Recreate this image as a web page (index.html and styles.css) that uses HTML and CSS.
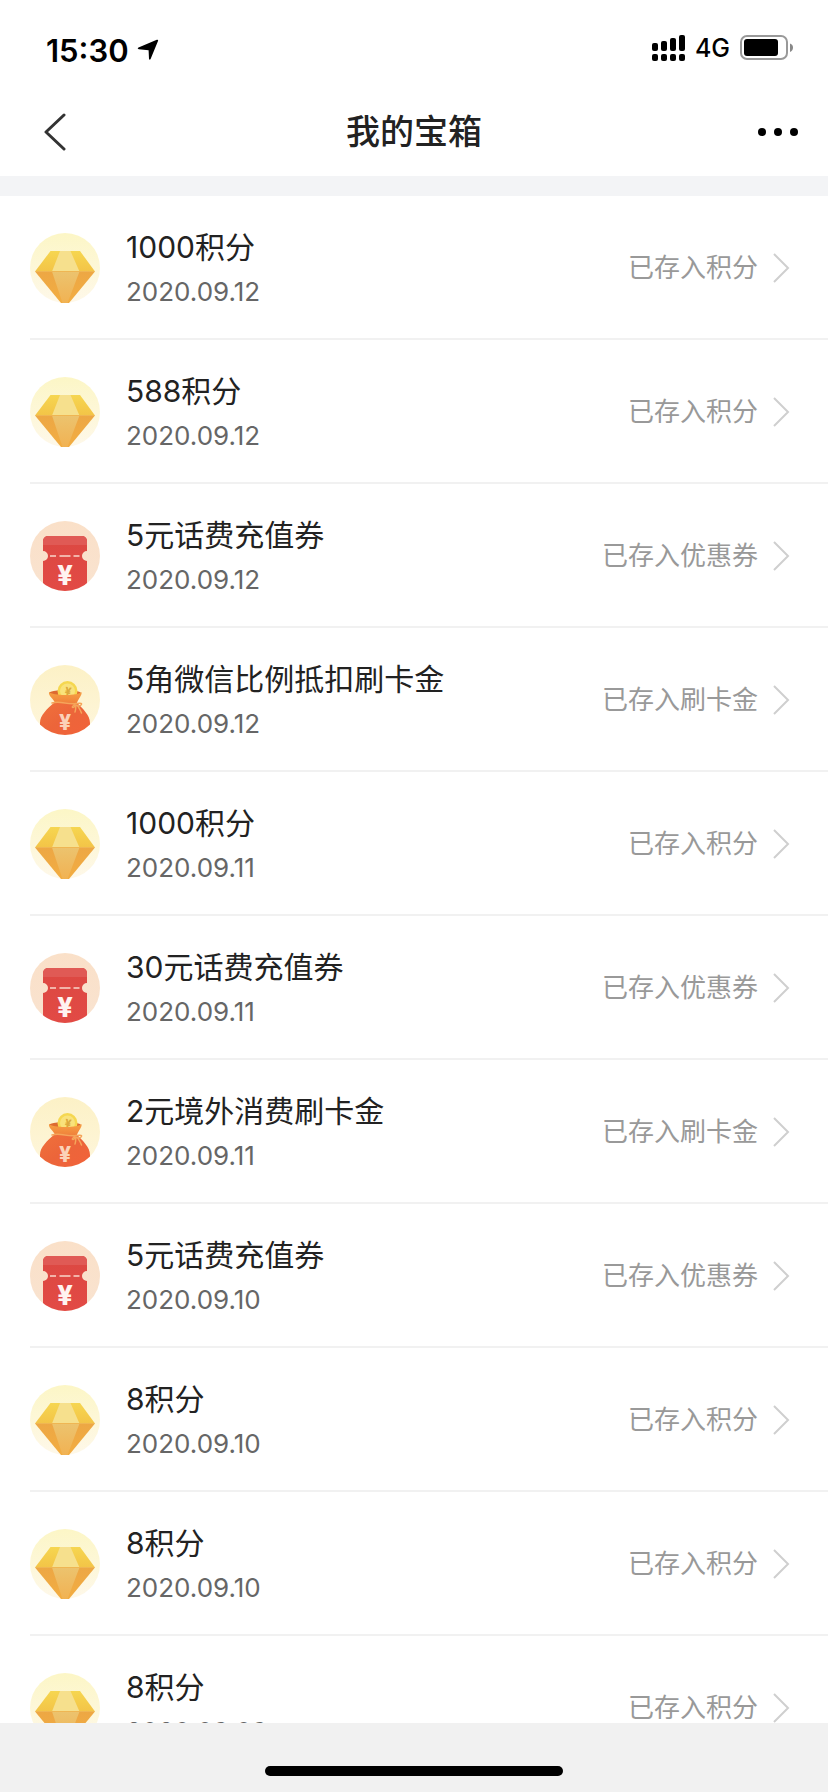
FILE: index.html
```html
<!DOCTYPE html>
<html lang="zh-CN">
<head>
<meta charset="utf-8">
<meta name="viewport" content="width=device-width, initial-scale=1">
<title>我的宝箱</title>
<link rel="stylesheet" href="styles.css">
</head>
<body>
<svg class="sprite" width="0" height="0" aria-hidden="true">
  <defs>
    <linearGradient id="halo" x1="0" y1="0" x2="0" y2="1"><stop offset="0" stop-color="#fcf6c6"/><stop offset="1" stop-color="#fef8ea"/></linearGradient>
    <linearGradient id="gemTop" x1="0" y1="0" x2="0" y2="1"><stop offset="0" stop-color="#f6d650"/><stop offset="1" stop-color="#f3c447"/></linearGradient>
    <linearGradient id="gemLow" x1="0" y1="0" x2="0" y2="1"><stop offset="0" stop-color="#eda744"/><stop offset="1" stop-color="#f2ad42"/></linearGradient>
    <linearGradient id="gemMid" x1="0" y1="0" x2="0" y2="1"><stop offset="0" stop-color="#ecc36e"/><stop offset="1" stop-color="#f1b253"/></linearGradient>
    <linearGradient id="peach" x1="0" y1="0" x2="0" y2="1"><stop offset="0" stop-color="#fae0c8"/><stop offset="1" stop-color="#f9e3d0"/></linearGradient>
    <linearGradient id="red" x1="0" y1="0" x2="0" y2="1"><stop offset="0" stop-color="#dc4842"/><stop offset="1" stop-color="#e24a45"/></linearGradient>
    <linearGradient id="cream" x1="0" y1="0" x2="0" y2="1"><stop offset="0" stop-color="#fcf1c6"/><stop offset="1" stop-color="#fef6dc"/></linearGradient>
    <linearGradient id="bagBody" x1="0" y1="0" x2="1" y2="1"><stop offset="0" stop-color="#f0713b"/><stop offset=".5" stop-color="#ec653a"/><stop offset="1" stop-color="#f2623a"/></linearGradient>
    <linearGradient id="bagRim" x1="0" y1="0" x2="0" y2="1"><stop offset="0" stop-color="#f6a043"/><stop offset="1" stop-color="#ef7f3a"/></linearGradient>
    <clipPath id="disc"><circle cx="35" cy="35" r="35"/></clipPath>
  </defs>
  <symbol id="gem" viewBox="0 0 70 70">
    <circle cx="35" cy="35" r="35" fill="url(#halo)"/>
    <path d="M20.500 18H50L65 38.500H5z" fill="url(#gemTop)"/>
    <path d="M5 38.500H65L39 70H31z" fill="url(#gemLow)"/>
    <path d="M30 18H40.500L49.500 38.500H22z" fill="#f6e08d"/>
    <path d="M22 38.500H49.500L37.500 70H32.500z" fill="url(#gemMid)"/>
    <path d="M5.500 38.500H64.500" stroke="#efb653" stroke-width="1"/>
  </symbol>
  <symbol id="ticket" viewBox="0 0 70 70">
    <circle cx="35" cy="35" r="35" fill="url(#peach)"/>
    <g clip-path="url(#disc)">
      <path d="M18 15H52a5 5 0 0 1 5 5V30a5 5 0 0 0 0 10V70H13V40a5 5 0 0 0 0-10V20a5 5 0 0 1 5-5z" fill="url(#red)"/>
      <path d="M18 15H52a5 5 0 0 1 5 5V24H13V20a5 5 0 0 1 5-5z" fill="#e05a55"/>
      <path d="M20 35h6M29.500 35h11M43.500 35h6" stroke="#f2b3a8" stroke-width="2"/>
      <text class="yen" x="35" y="64" font-size="27" fill="#fff3f1">¥</text>
    </g>
  </symbol>
  <symbol id="bag" viewBox="0 0 70 70">
    <circle cx="35" cy="35" r="35" fill="url(#cream)"/>
    <g clip-path="url(#disc)">
      <ellipse cx="35" cy="28" rx="16" ry="3" fill="#dd6a31"/>
      <circle cx="37.500" cy="26" r="10" fill="#f5d750"/>
      <circle cx="37.500" cy="26" r="7.500" fill="#f9e27b"/>
      <text class="yen" x="38" y="30" font-size="11" fill="#dca93c" transform="rotate(10 38 26)">¥</text>
      <path d="M25 37C17 44 10 50 10 58V70H60V58C60 50 53 44 46 37z" fill="url(#bagBody)"/>
      <path d="M19 27C22 31 49 31 51.500 27C52.500 30 48 34 46.500 39C40 37 31 37 25 38C24 34 18 31 19 27z" fill="url(#bagRim)"/>
      <path d="M22 38C30 35.500 38 40 46 38.500C51 38 53 38 50.500 40.500C48.500 42 46 39 43.500 40.500C40.500 42.500 44 44 46 40C45.500 42 46 45 45 47M47.500 40.500C49 43 50.500 45 51.500 48" fill="none" stroke="#f5a55a" stroke-width="1.500" stroke-linecap="round"/>
      <text class="yen" x="35" y="65" font-size="21" fill="#fbd2b8">¥</text>
    </g>
  </symbol>
  <symbol id="chevron" viewBox="0 0 18 32">
    <path d="M2 2L16 16L2 30" fill="none" stroke="#cfcfcf" stroke-width="2"/>
  </symbol>
</svg>

<div class="statusbar">
  <div class="clock">
    <span>15:30</span>
    <svg width="22" height="22" viewBox="0 0 22 22" aria-hidden="true"><path d="M19.800 .8Q21.600 .3 21 2L13.600 20Q12.600 21.500 12 19.800L11.600 11.300L1.800 10.300Q-.2 9.500 1.500 8.400z" fill="#000"/></svg>
  </div>
  <div class="signals">
    <svg width="33" height="26" viewBox="0 0 33 26" aria-hidden="true">
      <rect x="0" y="8" width="6" height="8" rx="2"/><rect x="9" y="6" width="6" height="10" rx="2"/><rect x="18" y="3" width="6" height="13" rx="2"/><rect x="27" y="0" width="6" height="16" rx="2"/>
      <rect x="0" y="19" width="6" height="7" rx="2"/><rect x="9" y="19" width="6" height="7" rx="2"/><rect x="18" y="19" width="6" height="7" rx="2"/><rect x="27" y="19" width="6" height="7" rx="2"/>
    </svg>
    <span>4G</span>
    <svg width="54" height="26" viewBox="0 0 54 26" aria-hidden="true">
      <rect x="1" y="1" width="46" height="23" rx="6" fill="none" stroke="#999" stroke-width="2"/>
      <rect x="4" y="4" width="34" height="17" rx="3"/>
      <path d="M50 8.500Q53 9.500 53 12.500T50 17z" fill="#888"/>
    </svg>
  </div>
</div>

<header class="navbar">
  <button class="icon-button" type="button" aria-label="返回"><svg width="24" height="38" viewBox="0 0 24 38"><path d="M21 2L3 19L21 36" fill="none" stroke="#333" stroke-width="3" stroke-linecap="round" stroke-linejoin="round"/></svg></button>
  <h1 class="title">我的宝箱</h1>
  <button class="icon-button more" type="button" aria-label="更多"><svg width="40" height="8" viewBox="0 0 40 8"><circle cx="4" cy="4" r="4"/><circle cx="20" cy="4" r="4"/><circle cx="36" cy="4" r="4"/></svg></button>
</header>

<main class="content">
  <ul class="rewards">
    <li><a class="reward" href="#"><svg class="badge"><use href="#gem"/></svg><span class="info"><span class="name">1000积分</span><time class="date">2020.09.12</time></span><span class="state">已存入积分</span><svg class="arrow"><use href="#chevron"/></svg></a></li>
    <li><a class="reward" href="#"><svg class="badge"><use href="#gem"/></svg><span class="info"><span class="name">588积分</span><time class="date">2020.09.12</time></span><span class="state">已存入积分</span><svg class="arrow"><use href="#chevron"/></svg></a></li>
    <li><a class="reward" href="#"><svg class="badge"><use href="#ticket"/></svg><span class="info"><span class="name">5元话费充值券</span><time class="date">2020.09.12</time></span><span class="state">已存入优惠券</span><svg class="arrow"><use href="#chevron"/></svg></a></li>
    <li><a class="reward" href="#"><svg class="badge"><use href="#bag"/></svg><span class="info"><span class="name">5角微信比例抵扣刷卡金</span><time class="date">2020.09.12</time></span><span class="state">已存入刷卡金</span><svg class="arrow"><use href="#chevron"/></svg></a></li>
    <li><a class="reward" href="#"><svg class="badge"><use href="#gem"/></svg><span class="info"><span class="name">1000积分</span><time class="date">2020.09.11</time></span><span class="state">已存入积分</span><svg class="arrow"><use href="#chevron"/></svg></a></li>
    <li><a class="reward" href="#"><svg class="badge"><use href="#ticket"/></svg><span class="info"><span class="name">30元话费充值券</span><time class="date">2020.09.11</time></span><span class="state">已存入优惠券</span><svg class="arrow"><use href="#chevron"/></svg></a></li>
    <li><a class="reward" href="#"><svg class="badge"><use href="#bag"/></svg><span class="info"><span class="name">2元境外消费刷卡金</span><time class="date">2020.09.11</time></span><span class="state">已存入刷卡金</span><svg class="arrow"><use href="#chevron"/></svg></a></li>
    <li><a class="reward" href="#"><svg class="badge"><use href="#ticket"/></svg><span class="info"><span class="name">5元话费充值券</span><time class="date">2020.09.10</time></span><span class="state">已存入优惠券</span><svg class="arrow"><use href="#chevron"/></svg></a></li>
    <li><a class="reward" href="#"><svg class="badge"><use href="#gem"/></svg><span class="info"><span class="name">8积分</span><time class="date">2020.09.10</time></span><span class="state">已存入积分</span><svg class="arrow"><use href="#chevron"/></svg></a></li>
    <li><a class="reward" href="#"><svg class="badge"><use href="#gem"/></svg><span class="info"><span class="name">8积分</span><time class="date">2020.09.10</time></span><span class="state">已存入积分</span><svg class="arrow"><use href="#chevron"/></svg></a></li>
    <li><a class="reward" href="#"><svg class="badge"><use href="#gem"/></svg><span class="info"><span class="name">8积分</span><time class="date">2020.09.09</time></span><span class="state">已存入积分</span><svg class="arrow"><use href="#chevron"/></svg></a></li>
  </ul>
</main>

<footer class="home-area"><div class="home-bar"></div></footer>
</body>
</html>
```

FILE: styles.css
```css
* {
  box-sizing: border-box;
}

body {
  margin: 0;
  height: 100vh;
  display: flex;
  flex-direction: column;
  background: #fff;
  color: #222;
  font-family: Inter, "Noto Sans CJK SC", sans-serif;
}

svg {
  display: block;
  flex: none;
}

.sprite {
  position: absolute;
}

.yen {
  font-family: Inter, sans-serif;
  font-weight: 800;
  text-anchor: middle;
}

.statusbar {
  flex: none;
  display: flex;
  justify-content: space-between;
  align-items: center;
  height: 88px;
  padding: 12px 34px 0 46px;
  color: #000;
}

.clock,
.signals {
  display: flex;
  align-items: center;
}

.clock {
  gap: 8px;
  font-size: 31px;
  font-weight: 600;
}

.signals {
  gap: 10px;
  font-size: 25px;
  font-weight: 500;
  padding-bottom: 4px;
}

.navbar {
  flex: none;
  display: grid;
  grid-template-columns: 1fr auto 1fr;
  align-items: center;
  height: 88px;
  padding: 0 30px 0 43px;
}

.icon-button {
  display: flex;
  padding: 0;
  border: 0;
  background: none;
  justify-self: start;
}

.more {
  justify-self: end;
}

.title {
  margin: 0;
  padding-right: 13px;
  font-size: 34px;
  line-height: 48px;
  font-weight: 500;
}

.content {
  flex: 1;
  min-height: 0;
  overflow: hidden;
  border-top: 20px solid #f3f4f6;
}

.rewards {
  margin: 0;
  padding: 0 0 0 30px;
  list-style: none;
}

.reward {
  display: flex;
  align-items: center;
  height: 144px;
  padding: 2px 38px 0 0;
  border-bottom: 2px solid #f1f1f1;
  color: inherit;
  text-decoration: none;
}

.badge {
  width: 70px;
  height: 70px;
}

.info {
  flex: 1;
  display: flex;
  flex-direction: column;
  gap: 4px;
  margin-left: 26px;
}

.name {
  font-size: 30px;
  line-height: 44px;
}

.date {
  color: #666;
  font-size: 26px;
  line-height: 38px;
}

.state {
  color: #999;
  font-size: 26px;
  line-height: 38px;
}

.arrow {
  width: 18px;
  height: 32px;
  margin-left: 14px;
}

.home-area {
  flex: none;
  display: flex;
  justify-content: center;
  align-items: flex-end;
  height: 69px;
  padding-bottom: 16px;
  background: #f1f1f1;
}

.home-bar {
  width: 36%;
  height: 10px;
  border-radius: 5px;
  background: #000;
}
```
